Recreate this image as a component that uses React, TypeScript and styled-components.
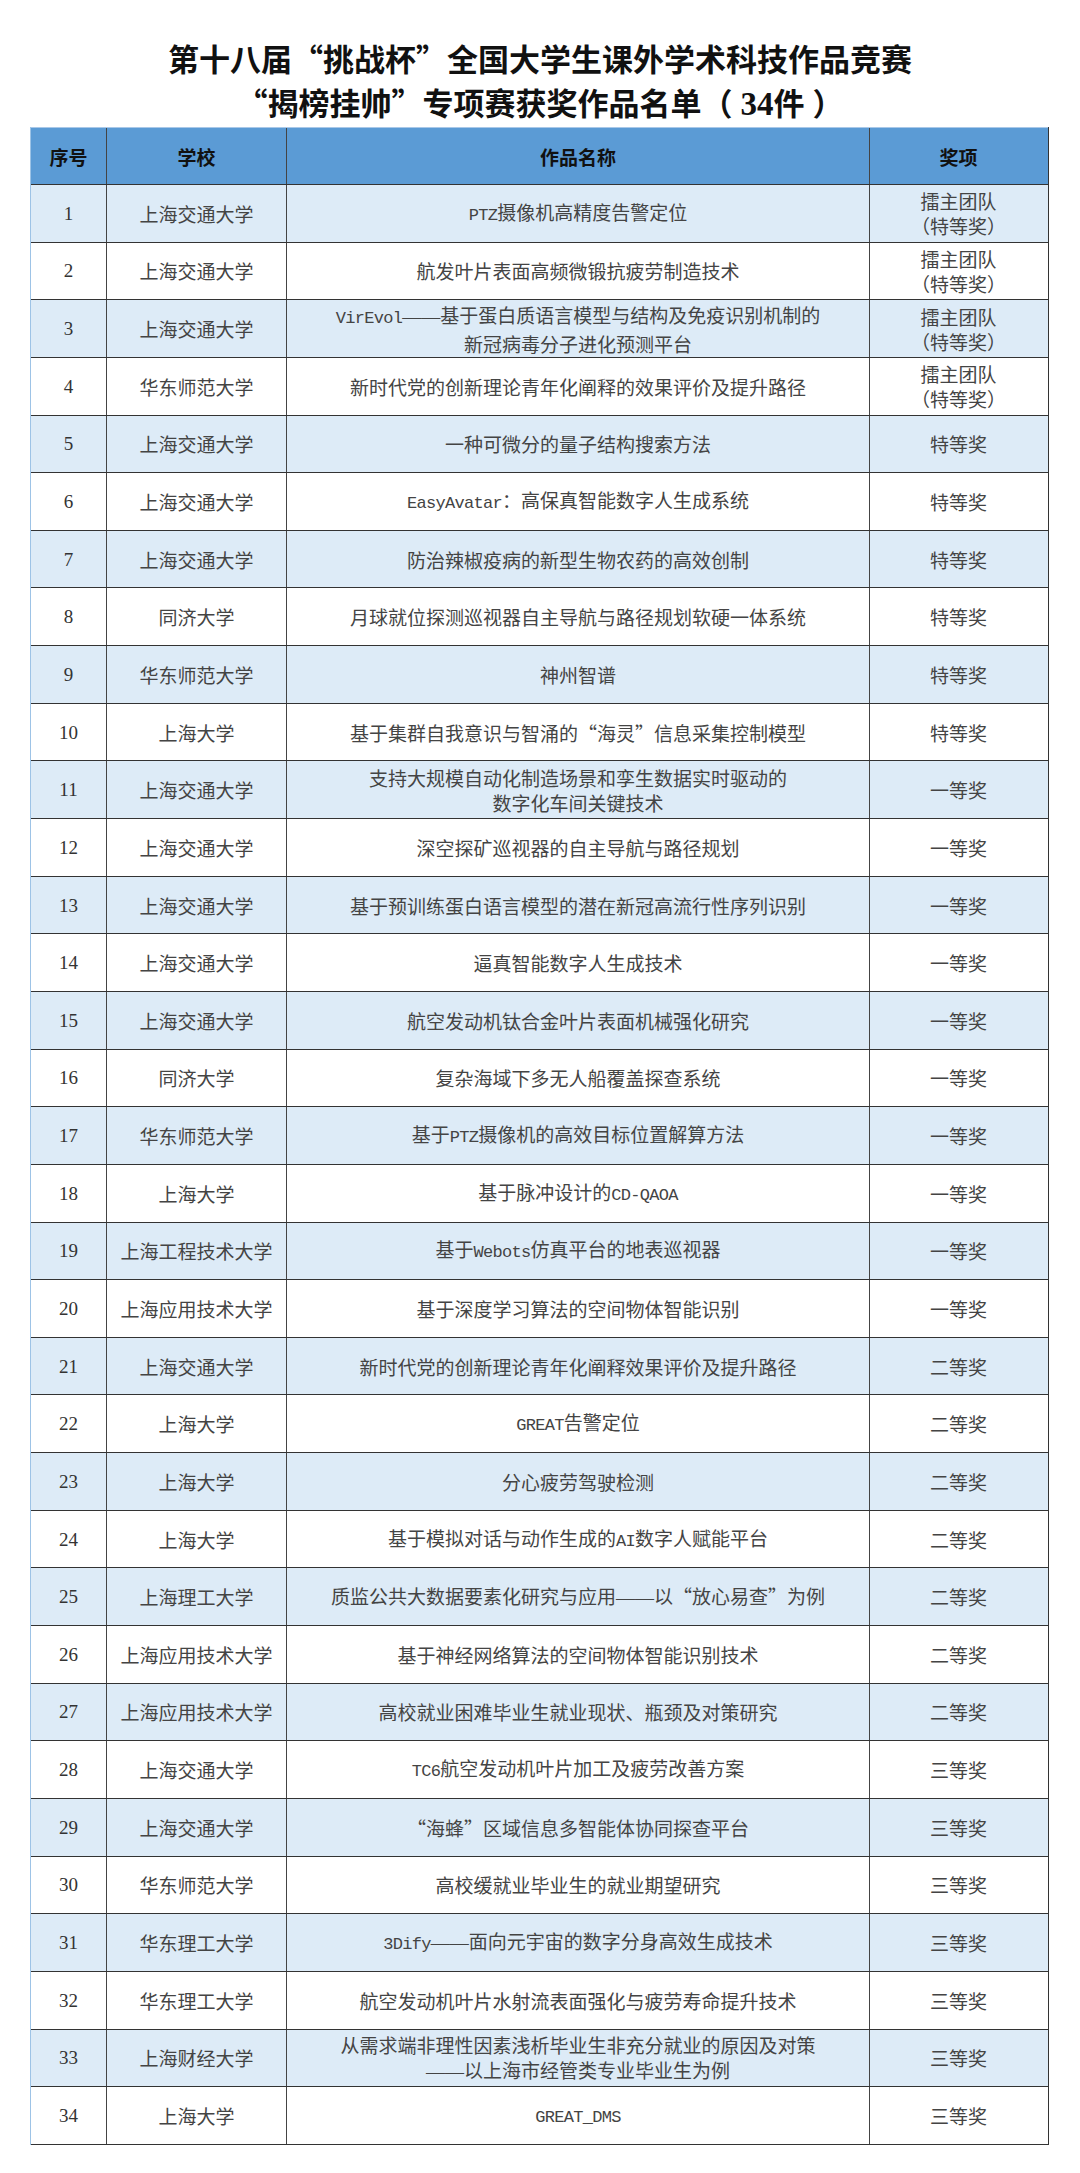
import styled, { createGlobalStyle } from "styled-components";

const GlobalStyle = createGlobalStyle`
  html, body {
    margin: 0;
    padding: 0;
    background: #ffffff;
  }
  body {
    font-family: "Noto Sans CJK SC", sans-serif;
  }
`;

const Page = styled.div`
  width: 1080px;
  padding-top: 36px;
  padding-bottom: 31px;
`;

const Title = styled.h1`
  margin: 0;
  text-align: center;
  font-family: "Noto Sans CJK SC", sans-serif;
  font-weight: 700;
  font-size: 31px;
  line-height: 44px;
  color: #111;
`;

const TitleCount = styled.span`
  padding: 0 8px;
`;

const TitleDigits = styled.span`
  font-family: "Liberation Serif", serif;
  font-size: 33px;
`;

const Table = styled.div`
  margin: 1px 0 0 30px;
  width: 1019px;
  box-sizing: border-box;
  border-left: 1px solid #9dc3e6;
  border-right: 1px solid #333;
`;

const HeaderRow = styled.div`
  display: grid;
  grid-template-columns: 76px 180px 583px 177px;
  height: 58px;
  box-sizing: border-box;
  border-top: 1px solid #a9c8e8;
  border-bottom: 1px solid #333;
  background: #5b9bd5;
`;

const Row = styled.div<{ $shaded: boolean }>`
  display: grid;
  grid-template-columns: 76px 180px 583px 177px;
  height: 57.647px;
  box-sizing: border-box;
  border-bottom: 1px solid #333;
  background: ${(p) => (p.$shaded ? "#ddebf7" : "#ffffff")};
`;

const Cell = styled.div<{ $last?: boolean }>`
  display: flex;
  flex-direction: column;
  justify-content: center;
  align-items: center;
  text-align: center;
  border-right: ${(p) => (p.$last ? "none" : "1px solid #444")};
  font-size: 19px;
  line-height: 25px;
  color: #444;
  white-space: nowrap;
`;

const HeadCell = styled(Cell)`
  font-weight: 700;
  font-size: 19px;
  color: #111;
`;

const NumText = styled.span`
  font-family: "Liberation Serif", serif;
  font-size: 19px;
  color: #333;
`;

const Latin = styled.span`
  font-family: "Liberation Mono", monospace;
  font-size: 17px;
  letter-spacing: -0.7px;
`;

const Dash = styled.span`
  font-family: "Liberation Serif", serif;
  font-size: 19px;
`;

interface IEntry {
  school: string;
  work: string[];
  award: string[];
}

const TOP = ["擂主团队", "（特等奖）"];

const entries: IEntry[] = [
  { school: "上海交通大学", work: ["PTZ摄像机高精度告警定位"], award: TOP },
  { school: "上海交通大学", work: ["航发叶片表面高频微锻抗疲劳制造技术"], award: TOP },
  {
    school: "上海交通大学",
    work: ["VirEvol——基于蛋白质语言模型与结构及免疫识别机制的", "新冠病毒分子进化预测平台"],
    award: TOP,
  },
  { school: "华东师范大学", work: ["新时代党的创新理论青年化阐释的效果评价及提升路径"], award: TOP },
  { school: "上海交通大学", work: ["一种可微分的量子结构搜索方法"], award: ["特等奖"] },
  { school: "上海交通大学", work: ["EasyAvatar：高保真智能数字人生成系统"], award: ["特等奖"] },
  { school: "上海交通大学", work: ["防治辣椒疫病的新型生物农药的高效创制"], award: ["特等奖"] },
  { school: "同济大学", work: ["月球就位探测巡视器自主导航与路径规划软硬一体系统"], award: ["特等奖"] },
  { school: "华东师范大学", work: ["神州智谱"], award: ["特等奖"] },
  { school: "上海大学", work: ["基于集群自我意识与智涌的“海灵”信息采集控制模型"], award: ["特等奖"] },
  {
    school: "上海交通大学",
    work: ["支持大规模自动化制造场景和孪生数据实时驱动的", "数字化车间关键技术"],
    award: ["一等奖"],
  },
  { school: "上海交通大学", work: ["深空探矿巡视器的自主导航与路径规划"], award: ["一等奖"] },
  { school: "上海交通大学", work: ["基于预训练蛋白语言模型的潜在新冠高流行性序列识别"], award: ["一等奖"] },
  { school: "上海交通大学", work: ["逼真智能数字人生成技术"], award: ["一等奖"] },
  { school: "上海交通大学", work: ["航空发动机钛合金叶片表面机械强化研究"], award: ["一等奖"] },
  { school: "同济大学", work: ["复杂海域下多无人船覆盖探查系统"], award: ["一等奖"] },
  { school: "华东师范大学", work: ["基于PTZ摄像机的高效目标位置解算方法"], award: ["一等奖"] },
  { school: "上海大学", work: ["基于脉冲设计的CD-QAOA"], award: ["一等奖"] },
  { school: "上海工程技术大学", work: ["基于Webots仿真平台的地表巡视器"], award: ["一等奖"] },
  { school: "上海应用技术大学", work: ["基于深度学习算法的空间物体智能识别"], award: ["一等奖"] },
  { school: "上海交通大学", work: ["新时代党的创新理论青年化阐释效果评价及提升路径"], award: ["二等奖"] },
  { school: "上海大学", work: ["GREAT告警定位"], award: ["二等奖"] },
  { school: "上海大学", work: ["分心疲劳驾驶检测"], award: ["二等奖"] },
  { school: "上海大学", work: ["基于模拟对话与动作生成的AI数字人赋能平台"], award: ["二等奖"] },
  { school: "上海理工大学", work: ["质监公共大数据要素化研究与应用——以“放心易查”为例"], award: ["二等奖"] },
  { school: "上海应用技术大学", work: ["基于神经网络算法的空间物体智能识别技术"], award: ["二等奖"] },
  { school: "上海应用技术大学", work: ["高校就业困难毕业生就业现状、瓶颈及对策研究"], award: ["二等奖"] },
  { school: "上海交通大学", work: ["TC6航空发动机叶片加工及疲劳改善方案"], award: ["三等奖"] },
  { school: "上海交通大学", work: ["“海蜂”区域信息多智能体协同探查平台"], award: ["三等奖"] },
  { school: "华东师范大学", work: ["高校缓就业毕业生的就业期望研究"], award: ["三等奖"] },
  { school: "华东理工大学", work: ["3Dify——面向元宇宙的数字分身高效生成技术"], award: ["三等奖"] },
  { school: "华东理工大学", work: ["航空发动机叶片水射流表面强化与疲劳寿命提升技术"], award: ["三等奖"] },
  {
    school: "上海财经大学",
    work: ["从需求端非理性因素浅析毕业生非充分就业的原因及对策", "——以上海市经管类专业毕业生为例"],
    award: ["三等奖"],
  },
  { school: "上海大学", work: ["GREAT_DMS"], award: ["三等奖"] },
];

// latin runs get a half-width mono face and dashes a full-width one, like the song font in the original
function Mixed({ text }: { text: string }) {
  const parts = text.split(/([A-Za-z0-9_\-]+|—+)/);
  return (
    <div>
      {parts.map((p, i) => {
        if (i % 2 === 0) return <span key={i}>{p}</span>;
        if (p.startsWith("—")) return <Dash key={i}>{p}</Dash>;
        return <Latin key={i}>{p}</Latin>;
      })}
    </div>
  );
}

function App() {
  return (
    <Page>
      <GlobalStyle />
      <Title>
        第十八届“挑战杯”全国大学生课外学术科技作品竞赛
        <br />
        “揭榜挂帅”专项赛获奖作品名单（
        <TitleCount>
          <TitleDigits>34</TitleDigits>件
        </TitleCount>
        ）
      </Title>
      <Table>
        <HeaderRow>
          <HeadCell>序号</HeadCell>
          <HeadCell>学校</HeadCell>
          <HeadCell>作品名称</HeadCell>
          <HeadCell $last>奖项</HeadCell>
        </HeaderRow>
        {entries.map((e, i) => (
          <Row key={i} $shaded={i % 2 === 0}>
            <Cell>
              <NumText>{i + 1}</NumText>
            </Cell>
            <Cell>{e.school}</Cell>
            <Cell>
              {e.work.map((line, j) => (
                <Mixed key={j} text={line} />
              ))}
            </Cell>
            <Cell $last>
              {e.award.map((line, j) => (
                <div key={j}>{line}</div>
              ))}
            </Cell>
          </Row>
        ))}
      </Table>
    </Page>
  );
}

export default App;
